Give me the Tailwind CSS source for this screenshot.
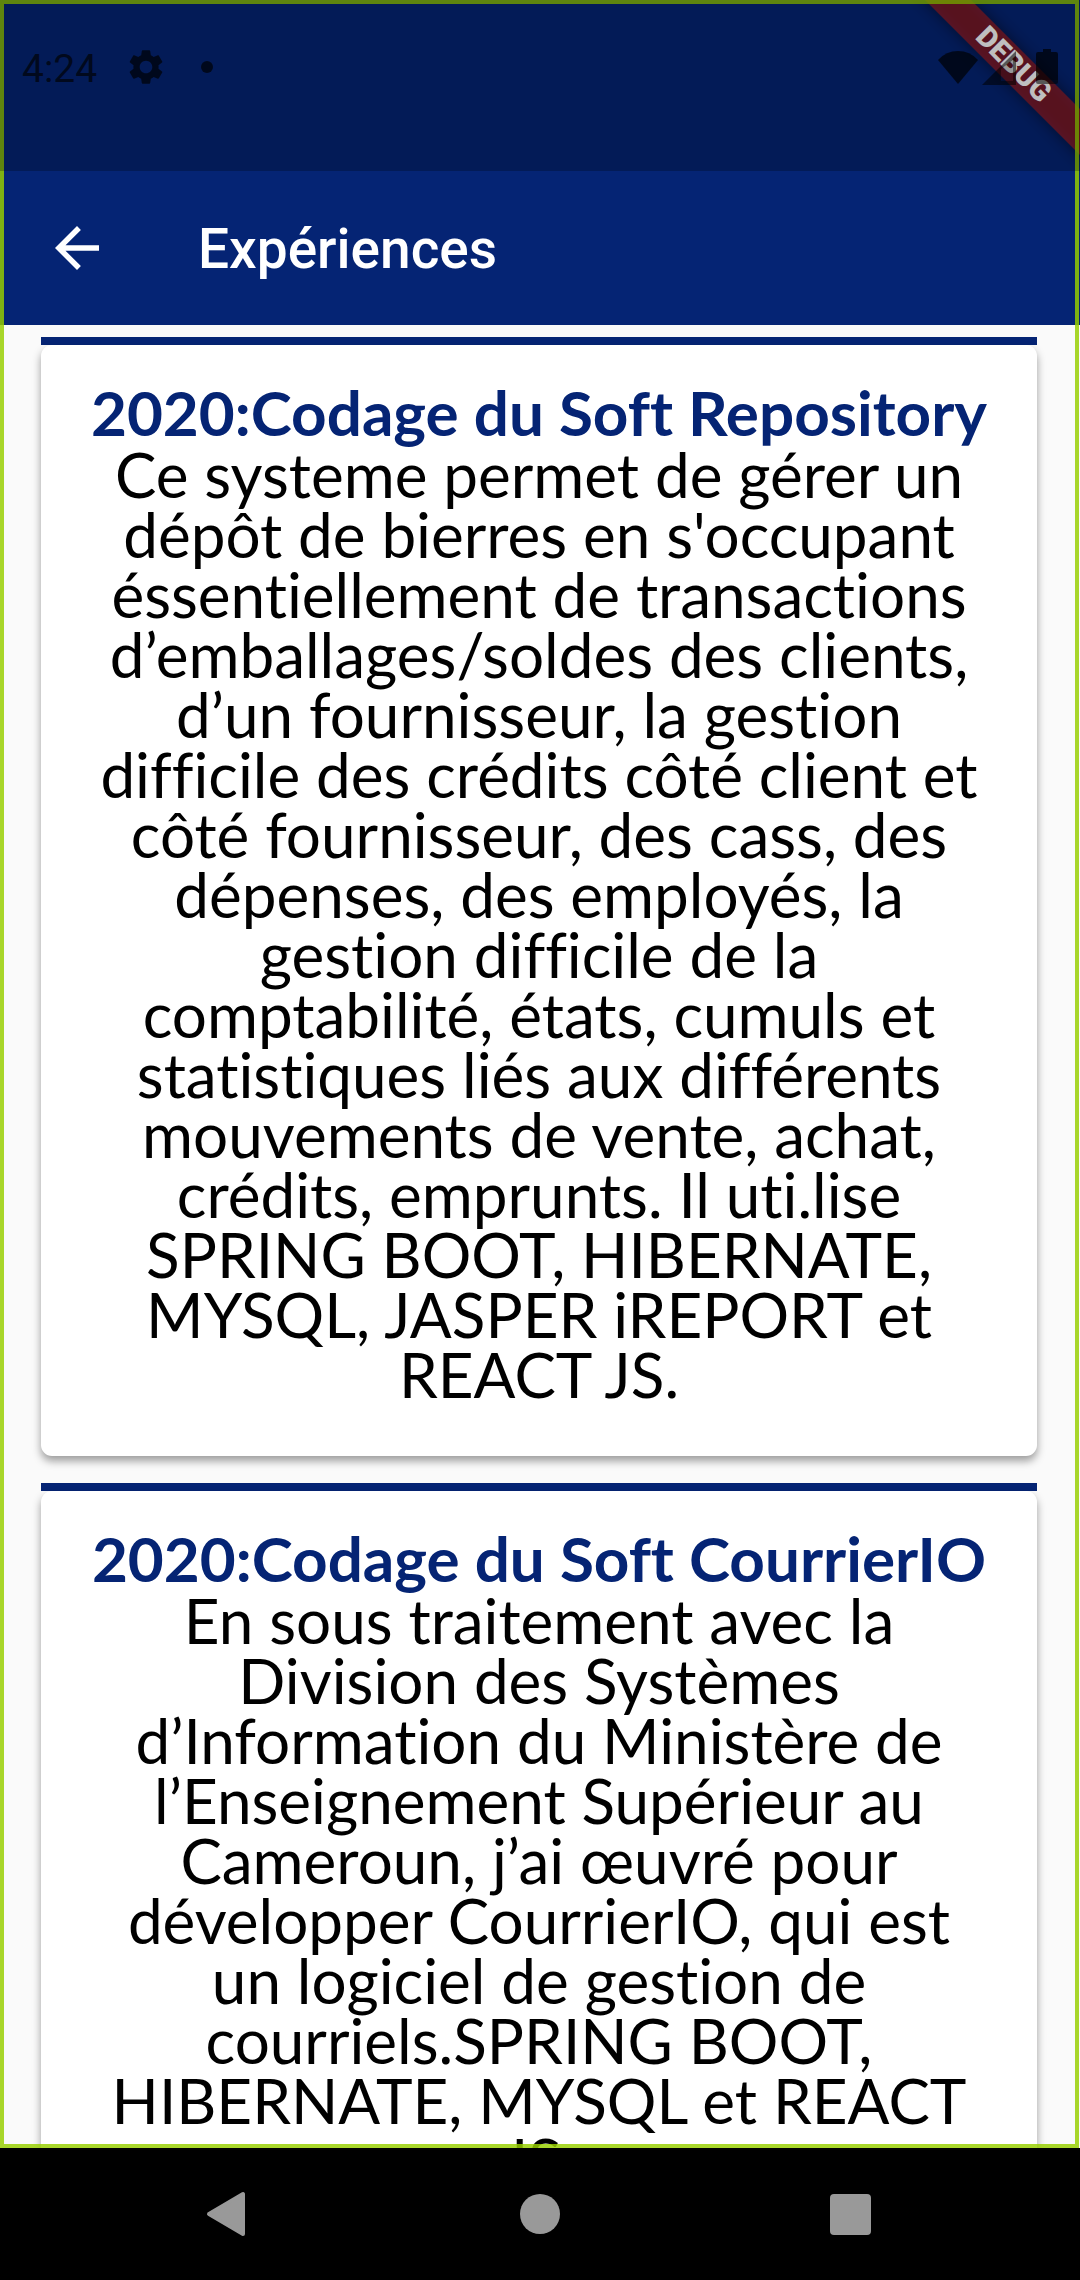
<!DOCTYPE html>
<html lang="fr">
<head>
<meta charset="utf-8">
<meta name="viewport" content="width=device-width, initial-scale=1">
<title>Expériences</title>
<script src="https://cdn.jsdelivr.net/npm/@tailwindcss/browser@4"></script>
</head>
<body class="bg-black">
<div class="flex h-screen flex-col overflow-hidden bg-black">

  <!-- App window -->
  <div class="relative flex min-h-0 flex-1 flex-col overflow-hidden bg-[#fafafa]">
    <header class="shrink-0 bg-[#052474] pt-[171px] font-['Roboto',sans-serif]">
      <div class="flex h-[154px] items-center gap-[88px] px-11">
        <button type="button" aria-label="Retour" class="size-[66px] text-white">
          <svg viewBox="0 0 24 24" class="size-full" fill="currentColor"><path d="M20 11H7.83l5.59-5.59L12 4l-8 8 8 8 1.41-1.41L7.83 13H20v-2z"/></svg>
        </button>
        <h1 class="pt-0.5 text-[55px] leading-[64px] font-medium text-white">Expériences</h1>
      </div>
    </header>

    <main class="min-h-0 flex-1 overflow-hidden pt-3 pr-[43px] pl-[41px] text-center font-['Lato',sans-serif] text-[62px] leading-[60px] [font-variant-ligatures:none]">
      <div class="flex flex-col gap-[27px]">
        <article class="border-t-8 border-[#052474]">
          <div class="rounded-[11px] bg-white pt-[37px] pb-[52px] shadow-[0_5px_9px_rgba(0,0,0,0.38)]">
            <h2 class="font-bold whitespace-nowrap text-[#052474]">2020:Codage du Soft Repository</h2>
            <p class="mt-0.5 whitespace-nowrap text-black">Ce systeme permet de gérer un<br>dépôt de bierres en s'occupant<br>éssentiellement de transactions<br>d’emballages/soldes des clients,<br>d’un fournisseur, la gestion<br>difficile des crédits côté client et<br>côté fournisseur, des cass, des<br>dépenses, des employés, la<br>gestion difficile de la<br>comptabilité, états, cumuls et<br>statistiques liés aux différents<br>mouvements de vente, achat,<br>crédits, emprunts. Il uti.lise<br>SPRING BOOT, HIBERNATE,<br>MYSQL, JASPER iREPORT et<br>REACT JS.</p>
          </div>
        </article>
        <article class="border-t-8 border-[#052474]">
          <div class="rounded-[11px] bg-white pt-[37px] pb-[52px] shadow-[0_5px_9px_rgba(0,0,0,0.38)]">
            <h2 class="font-bold whitespace-nowrap text-[#052474]">2020:Codage du Soft CourrierIO</h2>
            <p class="mt-0.5 whitespace-nowrap text-black">En sous traitement avec la<br>Division des Systèmes<br>d’Information du Ministère de<br>l’Enseignement Supérieur au<br>Cameroun, j’ai œuvré pour<br>développer CourrierIO, qui est<br>un logiciel de gestion de<br>courriels.SPRING BOOT,<br>HIBERNATE, MYSQL et REACT<br>JS.</p>
          </div>
        </article>
      </div>
    </main>

    <!-- Corner ribbon -->
    <svg class="absolute top-0 right-0 h-[180px] w-[200px]" viewBox="0 0 200 180" aria-hidden="true">
      <defs><filter id="soft" x="-30%" y="-30%" width="160%" height="160%"><feGaussianBlur stdDeviation="8"/></filter></defs>
      <path d="M5 -40H51L240 149V195Z" fill="#000" fill-opacity=".5" filter="url(#soft)"/>
      <path d="M5 -40H51L240 149V195Z" fill="#b71c1c" fill-opacity=".63"/>
      <text transform="translate(134 64) rotate(45)" x="0" y="10" text-anchor="middle" font-family="Roboto, sans-serif" font-weight="900" font-size="29" fill="#fff">DEBUG</text>
    </svg>

    <!-- Window outline -->
    <div class="pointer-events-none absolute inset-y-0 right-px left-0 border-4 border-[#98cf00]/83"></div>

    <!-- System status bar -->
    <div class="absolute inset-x-0 top-0 h-[171px] bg-black/25 text-black/68">
      <div class="flex h-[134px] items-center justify-between pr-[21px] pl-[22px]">
        <div class="flex items-center">
          <time class="pt-1 font-['Roboto',sans-serif] text-[39px] leading-[44px]">4:24</time>
          <svg viewBox="0 0 24 24" class="ml-7 size-[42px]" fill="currentColor" aria-hidden="true"><path d="M19.14 12.94c.04-.3.06-.61.06-.94 0-.32-.02-.64-.07-.94l2.03-1.58c.18-.14.23-.41.12-.61l-1.92-3.32c-.12-.22-.37-.29-.59-.22l-2.39.96c-.5-.38-1.03-.7-1.62-.94l-.36-2.54c-.04-.24-.24-.41-.48-.41h-3.84c-.24 0-.43.17-.47.41l-.36 2.54c-.59.24-1.13.57-1.62.94l-2.39-.96c-.22-.08-.47 0-.59.22L2.74 8.87c-.12.21-.08.47.12.61l2.03 1.58c-.05.3-.09.63-.09.94s.02.64.07.94l-2.03 1.58c-.18.14-.23.41-.12.61l1.92 3.32c.12.22.37.29.59.22l2.39-.96c.5.38 1.03.7 1.62.94l.36 2.54c.05.24.24.41.48.41h3.84c.24 0 .44-.17.47-.41l.36-2.54c.59-.24 1.13-.56 1.62-.94l2.39.96c.22.08.47 0 .59-.22l1.92-3.32c.12-.22.07-.47-.12-.61l-2.01-1.58zM12 15.6c-1.98 0-3.6-1.62-3.6-3.6s1.62-3.6 3.6-3.6 3.6 1.62 3.6 3.6-1.62 3.6-3.6 3.6z"/></svg>
          <span class="ml-[34px] size-3 rounded-full bg-black/68"></span>
        </div>
        <svg viewBox="0 0 122 36" class="h-9 w-[122px]" fill="currentColor" aria-hidden="true">
          <path d="M1 11Q9 2 21 2T41 11L21 35Z"/>
          <path fill-rule="evenodd" fill-opacity=".8" d="M45 36L79 2V36ZM64 32H76V11L64 20Z"/>
          <path fill-opacity=".3" d="M64 20L76 11V32H64Z"/>
          <path d="M106 0H114V3H119Q121 3 121 5V31H99V5Q99 3 101 3H106Z"/>
          <path fill-opacity=".8" d="M99 31H121V33Q121 35 119 35H101Q99 35 99 33Z"/>
        </svg>
      </div>
    </div>
  </div>

  <!-- System navigation -->
  <nav aria-label="Système" class="grid h-[132px] shrink-0 grid-cols-3 place-items-center bg-black px-[74px] text-[#999999]">
    <button type="button" aria-label="Précédent" class="size-12"><svg viewBox="0 0 48 48" class="size-full" fill="currentColor" stroke="currentColor" stroke-width="4" stroke-linejoin="round"><path d="M4 24L38 4V44Z"/></svg></button>
    <button type="button" aria-label="Accueil" class="size-10 rounded-full bg-[#999999]"></button>
    <button type="button" aria-label="Applications récentes" class="size-[41px] rounded-[4px] bg-[#999999]"></button>
  </nav>
</div>
</body>
</html>
